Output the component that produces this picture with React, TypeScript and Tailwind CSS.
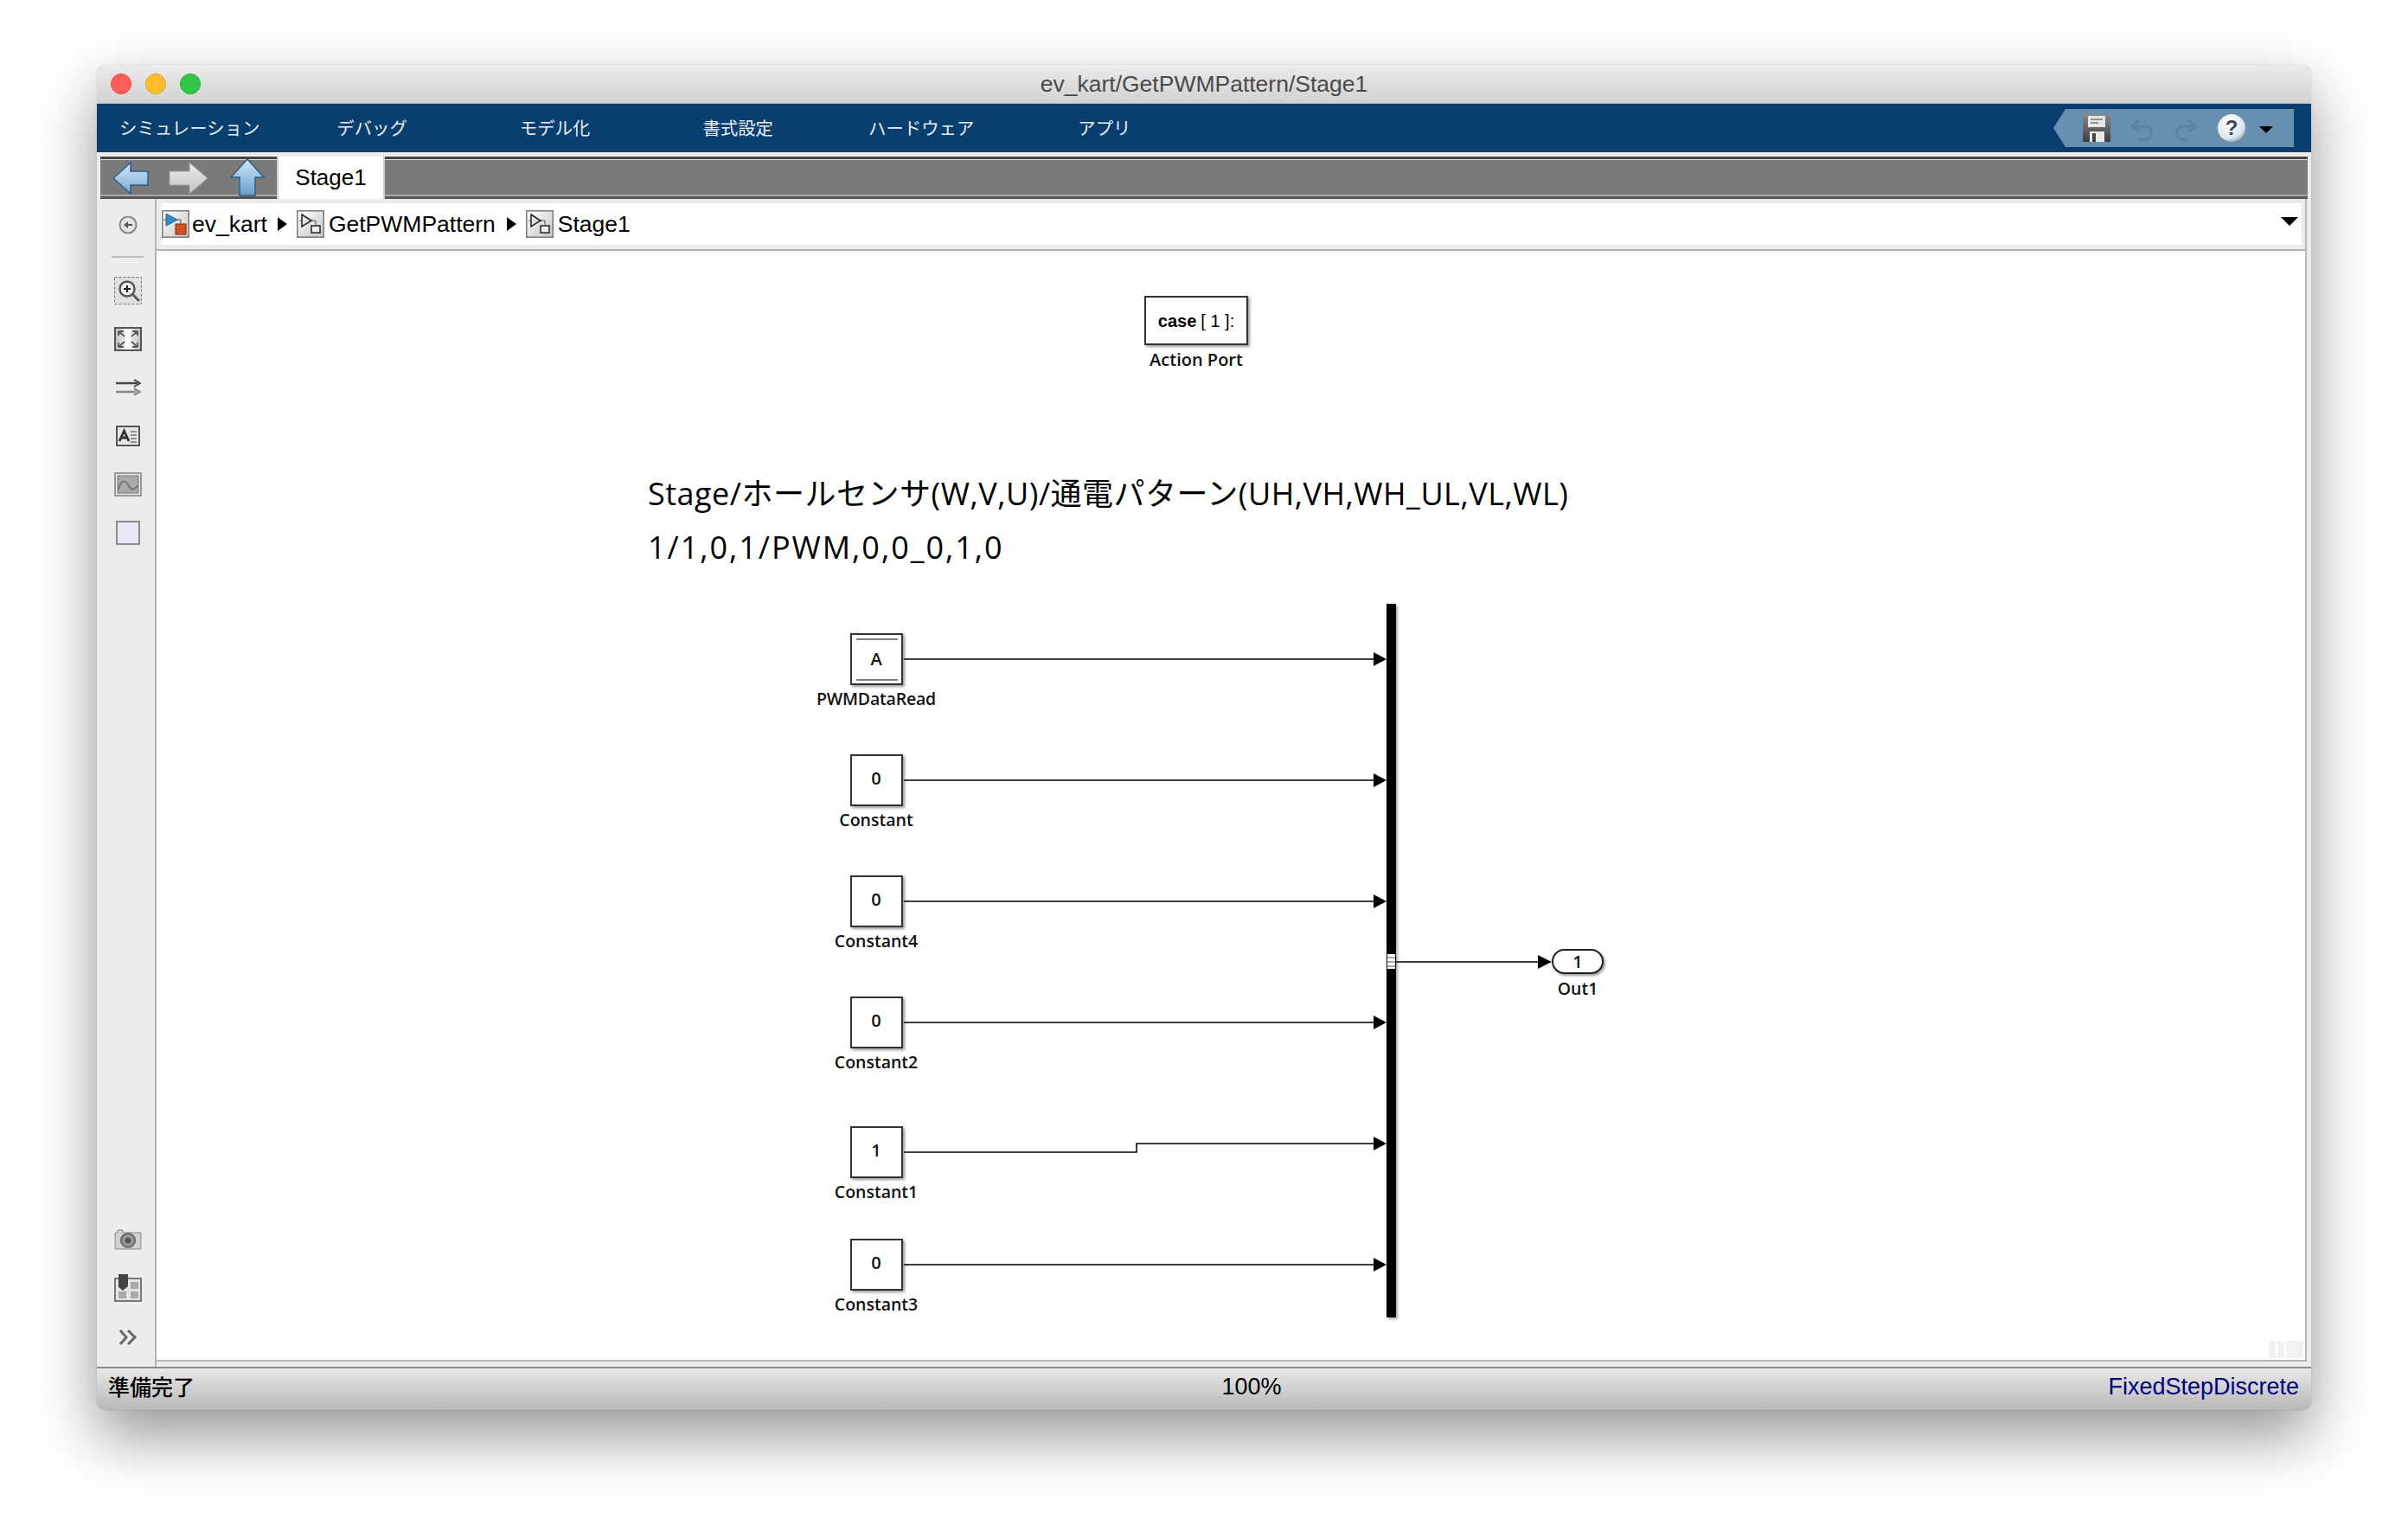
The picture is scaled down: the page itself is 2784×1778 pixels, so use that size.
import React from 'react';

const LABEL_FONT = "font-['Open_Sans','Noto_Sans_CJK_JP',sans-serif]";
const UI_FONT = "font-['Liberation_Sans','Noto_Sans_CJK_JP',sans-serif]";

const menuItems = [
  { label: 'シミュレーション', className: 'ml-[26px]' },
  { label: 'デバッグ', className: 'ml-[89px]' },
  { label: 'モデル化', className: 'ml-[130px]' },
  { label: '書式設定', className: 'ml-[130px]' },
  { label: 'ハードウェア', className: 'ml-[110px]' },
  { label: 'アプリ', className: 'ml-[120px]' },
];

const blocks = [
  { value: 'A', name: 'PWMDataRead', top: 'top-[442px]', goto: true, nameClass: 'tracking-[-0.2px]' },
  { value: '0', name: 'Constant', top: 'top-[582px]' },
  { value: '0', name: 'Constant4', top: 'top-[722px]' },
  { value: '0', name: 'Constant2', top: 'top-[862px]' },
  { value: '1', name: 'Constant1', top: 'top-[1012px]' },
  { value: '0', name: 'Constant3', top: 'top-[1142px]' },
];

function SubsystemIcon({ model }: { model?: boolean }) {
  return (
    <svg width="32" height="32" viewBox="0 0 32 32" className="shrink-0">
      <defs>
        <linearGradient id={model ? 'crumbA' : 'crumbB'} x1="0" y1="0" x2="1" y2="1">
          <stop offset="0" stopColor="#ffffff" />
          <stop offset="1" stopColor="#c4c4c4" />
        </linearGradient>
      </defs>
      <rect x="0.75" y="0.75" width="30.5" height="30.5" fill={model ? 'url(#crumbA)' : 'url(#crumbB)'} stroke="#7a7a7a" strokeWidth="1.5" />
      {model ? (
        <>
          <path d="M5 4 L18 11 L5 18 Z" fill="#2f8fc9" stroke="#1d5f8c" />
          <path d="M2 11 H5 M18 11 H22 V16" fill="none" stroke="#555" />
          <rect x="16" y="16" width="12" height="12" fill="#d2531f" stroke="#7f2c10" />
        </>
      ) : (
        <>
          <path d="M6 5 L17 12 L6 19 Z" fill="#e4e4e4" stroke="#222" strokeWidth="1.5" />
          <path d="M3 12 H6 M17 12 H22 V17" fill="none" stroke="#555" />
          <rect x="17" y="18" width="10" height="8" fill="#eeeeee" stroke="#222" strokeWidth="1.5" />
        </>
      )}
    </svg>
  );
}

function NavArrow({ kind }: { kind: 'back' | 'forward' | 'up' }) {
  if (kind === 'up') {
    return (
      <svg width="40" height="44" viewBox="0 0 40 44">
        <defs>
          <linearGradient id="navUp" x1="0" y1="0" x2="0" y2="1">
            <stop offset="0" stopColor="#d4e7f6" />
            <stop offset="1" stopColor="#659ecd" />
          </linearGradient>
        </defs>
        <path d="M20 1 L39 22 H29 V43 H11 V22 H1 Z" fill="url(#navUp)" stroke="#2f5f88" strokeWidth="1.5" />
      </svg>
    );
  }
  if (kind === 'forward') {
    return (
      <svg width="46" height="38" viewBox="0 0 46 38">
        <defs>
          <linearGradient id="navFwd" x1="0" y1="0" x2="0" y2="1">
            <stop offset="0" stopColor="#ececec" />
            <stop offset="1" stopColor="#c4c4c4" />
          </linearGradient>
        </defs>
        <path d="M1 11 H24 V1 L45 19 L24 37 V27 H1 Z" fill="url(#navFwd)" stroke="#9a9a9a" />
      </svg>
    );
  }
  return (
    <svg width="42" height="38" viewBox="0 0 42 38">
      <defs>
        <linearGradient id="navBack" x1="0" y1="0" x2="0" y2="1">
          <stop offset="0" stopColor="#d4e7f6" />
          <stop offset="1" stopColor="#74aad4" />
        </linearGradient>
      </defs>
      <path d="M41 11 H21 V1 L1 19 L21 37 V27 H41 Z" fill="url(#navBack)" stroke="#2f5f88" strokeWidth="1.5" />
    </svg>
  );
}

function ToolIcon({ kind }: { kind: string }) {
  switch (kind) {
    case 'zoom':
      return (
        <svg width="32" height="32" viewBox="0 0 32 32">
          <rect x="0.5" y="0.5" width="31" height="31" fill="#e0e0e0" stroke="#777" strokeDasharray="3 2" />
          <circle cx="15" cy="14" r="8.5" fill="#f4f4f4" stroke="#555" strokeWidth="2.5" />
          <path d="M21 20 L29 28" stroke="#555" strokeWidth="3" />
          <path d="M11 14 H19 M15 10 V18" stroke="#222" strokeWidth="2" />
        </svg>
      );
    case 'fit':
      return (
        <svg width="32" height="28" viewBox="0 0 32 28">
          <defs>
            <linearGradient id="fitFill" x1="0" y1="0" x2="1" y2="0">
              <stop offset="0" stopColor="#bdbdbd" />
              <stop offset="0.5" stopColor="#ffffff" />
              <stop offset="1" stopColor="#bdbdbd" />
            </linearGradient>
          </defs>
          <rect x="1" y="1" width="30" height="26" fill="url(#fitFill)" stroke="#555" strokeWidth="2" />
          <path d="M5 5 L12 11 M5 5 H11 M5 5 V10 M27 5 L20 11 M27 5 H21 M27 5 V10 M5 23 L12 17 M5 23 H11 M5 23 V18 M27 23 L20 17 M27 23 H21 M27 23 V18" stroke="#555" strokeWidth="1.8" fill="none" />
        </svg>
      );
    case 'arrows':
      return (
        <svg width="30" height="20" viewBox="0 0 30 20">
          <path d="M1 5 H26" stroke="#444" strokeWidth="2.5" />
          <path d="M22 1 L29 5 L22 9" fill="none" stroke="#444" strokeWidth="2" />
          <path d="M1 15 H26" stroke="#888" strokeWidth="2.5" />
          <path d="M22 11 L29 15 L22 19" fill="#aaa" stroke="#888" strokeWidth="2" />
        </svg>
      );
    case 'text':
      return (
        <svg width="28" height="24" viewBox="0 0 28 24">
          <rect x="1" y="1" width="26" height="22" fill="#e6e6e6" stroke="#555" strokeWidth="2" />
          <path d="M4 18 L9.5 6 L15 18 M6.5 14 H12.5" fill="none" stroke="#333" strokeWidth="2.8" />
          <path d="M17 7 H24 M17 11 H24 M17 15 H24 M17 19 H24" stroke="#777" strokeWidth="1.5" />
        </svg>
      );
    case 'image':
      return (
        <svg width="32" height="28" viewBox="0 0 32 28">
          <rect x="1" y="1" width="30" height="26" fill="#e8e8e8" stroke="#999" strokeWidth="2" />
          <rect x="4" y="4" width="24" height="20" fill="#a9a9a9" stroke="#777" />
          <path d="M5 20 C8 8, 13 8, 17 16 C20 22, 24 20, 27 15" fill="none" stroke="#777" strokeWidth="2" />
        </svg>
      );
    case 'area':
      return <div className="w-[28px] h-[28px] bg-[#e8e8f6] border-2 border-[#8c8c8c]" />;
    case 'camera':
      return (
        <svg width="32" height="24" viewBox="0 0 32 24">
          <path d="M1 4 H4 V1 H10 V4 H31 V23 H1 Z" fill="#d0d0d0" stroke="#888" />
          <circle cx="16" cy="13" r="8" fill="#999" stroke="#666" strokeWidth="2" />
          <circle cx="16" cy="13" r="3.5" fill="#555" />
        </svg>
      );
    case 'library':
      return (
        <svg width="32" height="32" viewBox="0 0 32 32">
          <rect x="1" y="5" width="30" height="26" fill="#e4e4e4" stroke="#777" strokeWidth="2" />
          <rect x="19" y="9" width="9" height="8" fill="#aaa" />
          <rect x="19" y="20" width="9" height="8" fill="#aaa" />
          <rect x="5" y="20" width="9" height="8" fill="#aaa" />
          <path d="M5 0 H16 V14 L10 19 L5 15 Z" fill="#444" />
        </svg>
      );
    default:
      return (
        <svg width="22" height="20" viewBox="0 0 22 20">
          <path d="M2 2 L9 10 L2 18 M11 2 L19 10 L11 18" fill="none" stroke="#666" strokeWidth="3" />
        </svg>
      );
  }
}

function DiagramBlock({ value, name, top, goto, nameClass }: { value: string; name: string; top: string; goto?: boolean; nameClass?: string }) {
  return (
    <div className={`absolute left-[732px] ${top} w-[200px] flex flex-col items-center`}>
      <div className="relative w-[61px] h-[60px] bg-white border-2 border-[#333] shadow-[2px_2px_3px_rgba(0,0,0,0.4)] flex items-center justify-center">
        {goto && (
          <>
            <div className="absolute left-[5px] right-[4px] top-[4px] h-[2px] bg-[#808080]" />
            <div className="absolute left-[5px] right-[4px] bottom-[3px] h-[2px] bg-[#808080]" />
          </>
        )}
        <span className={`${LABEL_FONT} text-[20px] leading-none font-semibold text-[#111] ${goto ? '' : '-mt-[4px]'}`}>{value}</span>
      </div>
      <div className={`${LABEL_FONT} mt-[3px] text-[19.5px] leading-[26px] font-semibold text-[#111] ${nameClass ?? ''}`}>{name}</div>
    </div>
  );
}

export default function App() {
  return (
    <div className={`${UI_FONT} w-[2784px] h-[1778px] bg-white pt-[75px] pl-[112px] overflow-hidden`}>
      <div className="w-[2560px] h-[1555px] flex flex-col bg-[#ececec] rounded-t-[12px] rounded-b-[10px] shadow-[0_30px_70px_rgba(0,0,0,0.42),0_0_1px_rgba(0,0,0,0.5)] overflow-hidden">
        {/* title bar */}
        <div className="h-[45px] grid grid-cols-[1fr_auto_1fr] items-center bg-gradient-to-b from-[#ebebeb] to-[#d2d2d2] border-b border-[#b4b4b4]">
          <div className="flex items-center gap-[16px] pl-[16px]">
            <div className="w-[24px] h-[24px] rounded-full bg-[#ff5f57] border border-[#e0443e]" />
            <div className="w-[24px] h-[24px] rounded-full bg-[#ffbd2e] border border-[#dea123]" />
            <div className="w-[24px] h-[24px] rounded-full bg-[#33c748] border border-[#1aab29]" />
          </div>
          <div className="pt-[2px] text-[26.5px] text-[#4a4a4a]">ev_kart/GetPWMPattern/Stage1</div>
          <div />
        </div>

        {/* menu strip */}
        <div className="h-[56px] bg-[#083f70] flex items-center justify-between pr-[20px]">
          <div className="pb-[2px] flex items-center font-['Noto_Sans_CJK_JP',sans-serif] text-[20.4px] text-[#e8eef4]">
            {menuItems.map((m) => (
              <span key={m.label} className={m.className}>{m.label}</span>
            ))}
          </div>
          <div className="relative w-[278px] h-[44px] bg-[#678fb0] [clip-path:polygon(14px_0,100%_0,100%_100%,14px_100%,0_50%)]">
            <svg width="278" height="44" viewBox="2374 126 278 44">
              <defs>
                <linearGradient id="disk" x1="0" y1="0" x2="0" y2="1">
                  <stop offset="0" stopColor="#8a8a8a" />
                  <stop offset="1" stopColor="#3e3e3e" />
                </linearGradient>
                <radialGradient id="help" cx="0.4" cy="0.3" r="0.8">
                  <stop offset="0" stopColor="#ffffff" />
                  <stop offset="0.7" stopColor="#dfe6ee" />
                  <stop offset="1" stopColor="#7f93a9" />
                </radialGradient>
              </defs>
              <path d="M2408 132 H2440 V164 H2408 Z" fill="url(#disk)" />
              <rect x="2414" y="134" width="20" height="13" fill="#e6e6e6" />
              <path d="M2417 138 H2431 M2417 142 H2426" stroke="#777" strokeWidth="1.5" />
              <rect x="2416" y="152" width="17" height="12" fill="#e8e8e8" />
              <rect x="2419" y="154" width="4" height="10" fill="#444" />
              <path d="M2474 139 L2465 146 L2474 152 M2466 146 H2482 A8 8 0 0 1 2482 161 H2472" fill="none" stroke="#5683a8" strokeWidth="3" />
              <path d="M2530 139 L2539 146 L2530 152 M2538 146 H2522 A8 8 0 0 0 2522 161 H2530" fill="none" stroke="#5683a8" strokeWidth="3" />
              <circle cx="2580" cy="148" r="16" fill="url(#help)" />
              <text x="2580" y="156" textAnchor="middle" fontSize="24" fontWeight="700" fill="#3b4a63" fontFamily="Liberation Sans">?</text>
              <path d="M2612 146 H2628 L2620 154 Z" fill="#000" />
            </svg>
          </div>
        </div>

        {/* tab strip */}
        <div className="pt-[5px] px-[4px]">
          <div className="h-[49px] flex items-stretch bg-[#7a7a7a] border-t-[3px] border-[#444] shadow-[inset_0_1px_0_#ddd,inset_0_-2px_0_#a8a8a8] border-b-[3px] border-b-[#555]">
            <div className="w-[204px] flex items-center">
              <div className="ml-[14px]"><NavArrow kind="back" /></div>
              <div className="ml-[23px]"><NavArrow kind="forward" /></div>
              <div className="ml-[25px] -mt-[2px]"><NavArrow kind="up" /></div>
            </div>
            <div className="w-[125px] -mt-[3px] -mb-[3px] bg-white border-x-2 border-[#cfcfcf] flex items-center justify-center text-[26px] text-black">
              Stage1
            </div>
          </div>
        </div>

        {/* body */}
        <div className="flex-1 flex min-h-0">
          <div className="w-[69px] pl-[4px] flex flex-col items-center border-r-2 border-[#b4b4b4]">
            <svg width="22" height="22" viewBox="0 0 22 22" className="mt-[19px]">
              <circle cx="11" cy="11" r="9.5" fill="#e2e2e2" stroke="#888" strokeWidth="2" />
              <path d="M6 11 L11 7 V10 H16 V12 H11 V15 Z" fill="#555" />
            </svg>
            <div className="mt-[25px] w-[37px] h-[2px] bg-[#bdbdbd]" />
            <div className="mt-[22px] h-[32px] flex items-center"><ToolIcon kind="zoom" /></div>
            <div className="mt-[26px] h-[28px] flex items-center"><ToolIcon kind="fit" /></div>
            <div className="mt-[32px] h-[20px] flex items-center"><ToolIcon kind="arrows" /></div>
            <div className="mt-[34px] h-[24px] flex items-center"><ToolIcon kind="text" /></div>
            <div className="mt-[30px] h-[28px] flex items-center"><ToolIcon kind="image" /></div>
            <div className="mt-[28px] h-[28px] flex items-center"><ToolIcon kind="area" /></div>
            <div className="mt-auto h-[24px] flex items-center"><ToolIcon kind="camera" /></div>
            <div className="mt-[28px] h-[32px] flex items-center"><ToolIcon kind="library" /></div>
            <div className="mt-[31px] mb-[24px] h-[20px] flex items-center"><ToolIcon kind="more" /></div>
          </div>

          <div className="flex-1 min-w-0 flex flex-col pr-[5px]">
            {/* breadcrumb */}
            <div className="h-[60px] flex items-center pl-[5px] pr-[4px] border-b-2 border-[#b0b0b0] border-r-2 border-r-[#b4b4b4]">
              <div className="flex-1 h-[48px] bg-white flex items-center justify-between text-[26.5px] text-black">
                <div className="flex items-center">
                  <div className="ml-[1px]"><SubsystemIcon model /></div>
                  <span className="ml-[3px] pt-[2px]">ev_kart</span>
                  <div className="ml-[12px] w-0 h-0 border-y-[8px] border-y-transparent border-l-[11px] border-l-black" />
                  <div className="ml-[11px]"><SubsystemIcon /></div>
                  <span className="ml-[5px] pt-[2px]">GetPWMPattern</span>
                  <div className="ml-[13px] w-0 h-0 border-y-[8px] border-y-transparent border-l-[11px] border-l-black" />
                  <div className="ml-[11px]"><SubsystemIcon /></div>
                  <span className="ml-[5px] pt-[2px]">Stage1</span>
                </div>
                <div className="mr-[4px] -mt-[6px] w-0 h-0 border-x-[10px] border-x-transparent border-t-[10px] border-t-black" />
              </div>
            </div>

            {/* canvas */}
            <div className="relative flex-1 bg-white border-r-2 border-b-2 border-[#b4b4b4] mb-[6px]">
              <svg className="absolute inset-0" width="2485" height="1284" viewBox="181 290 2485 1284">
                {[762, 902, 1042, 1182, 1462].map((y) => (
                  <g key={y}>
                    <path d="M1045 0 H1590" transform={`translate(0 ${y})`} stroke="#000" strokeWidth="1.5" />
                    <path d={`M1588 ${y - 8} L1603 ${y} L1588 ${y + 8} Z`} fill="#000" />
                  </g>
                ))}
                <path d="M1045 1332 H1314 V1322 H1590" fill="none" stroke="#000" strokeWidth="1.5" />
                <path d="M1588 1314 L1603 1322 L1588 1330 Z" fill="#000" />
                <path d="M1614 1112 H1780" stroke="#000" strokeWidth="1.5" />
                <path d="M1778 1104 L1794 1112 L1778 1120 Z" fill="#000" />
              </svg>

              <div className="absolute left-[1102px] top-[52px] w-[200px] flex flex-col items-center">
                <div className="w-[120px] h-[57px] bg-white border-2 border-[#333] shadow-[2px_2px_3px_rgba(0,0,0,0.4)] flex items-center justify-center text-[20px] text-black">
                  <span className="font-bold">case</span>
                  <span className="ml-[5px]">[ 1 ]:</span>
                </div>
                <div className={`${LABEL_FONT} mt-[4px] text-[20px] leading-[26px] font-semibold text-[#111]`}>Action Port</div>
              </div>

              <div className={`${LABEL_FONT} absolute left-[568px] top-[250px] text-[36px] leading-[62px] font-medium text-black`}>
                <div className="tracking-[0.5px]">
                  Stage/<span className="font-normal">ホールセンサ</span>(W,V,U)/<span className="font-normal">通電パターン</span>(UH,VH,WH_UL,VL,WL)
                </div>
                <div className="tracking-[1.95px]">1/1,0,1/PWM,0,0_0,1,0</div>
              </div>

              {blocks.map((b) => (
                <DiagramBlock key={b.name} {...b} />
              ))}

              <div className="absolute left-[1422px] top-[408px] w-[11px] h-[825px] bg-black shadow-[2px_2px_3px_rgba(0,0,0,0.35)]" />
              <div className="absolute left-[1423px] top-[813px] w-[9px] h-[17px] bg-[repeating-linear-gradient(to_bottom,#fff_0,#fff_3px,#aaa_3px,#aaa_5px)]" />

              <div className="absolute left-[1543px] top-[807px] w-[200px] flex flex-col items-center">
                <div className={`${LABEL_FONT} w-[60px] h-[29px] rounded-full bg-white border-2 border-[#222] shadow-[2px_2px_3px_rgba(0,0,0,0.4)] flex items-center justify-center text-[20px] font-semibold text-[#111]`}>1</div>
                <div className={`${LABEL_FONT} mt-[4px] text-[19.5px] leading-[26px] font-semibold text-[#111]`}>Out1</div>
              </div>

              <div className="absolute right-[2px] bottom-[2px] flex gap-[2px]">
                <div className="w-[8px] h-[20px] bg-[#f2f2f2]" />
                <div className="w-[8px] h-[20px] bg-[#f2f2f2]" />
                <div className="w-[20px] h-[20px] bg-[#f2f2f2]" />
              </div>
            </div>
          </div>
        </div>

        {/* status bar */}
        <div className="h-[50px] pb-[5px] grid grid-cols-3 items-center px-[13px] bg-gradient-to-b from-[#e8e8e8] to-[#b8b8b8] border-t-2 border-[#8a8a8a] text-[25px] text-black">
          <div className="font-['Noto_Sans_CJK_JP',sans-serif] font-medium -mt-[2px]">準備完了</div>
          <div className="text-center text-[27px] pl-[110px]">100%</div>
          <div className="text-right text-[27px] text-[#000080] pr-[1px]">FixedStepDiscrete</div>
        </div>
      </div>
    </div>
  );
}
